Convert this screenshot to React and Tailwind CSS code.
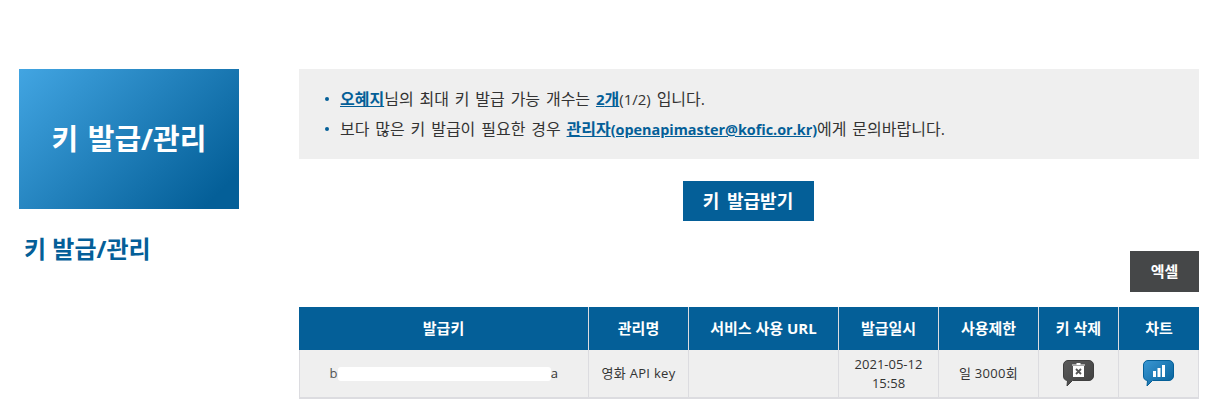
const font = { fontFamily: '"Open Sans","Noto Sans CJK KR","Noto Sans",sans-serif' };

function Bubble({ from, to, id, children }) {
  return (
    <svg width="31" height="27" viewBox="0 0 31 27" className="block">
      <defs>
        <linearGradient id={id} x1="0" y1="0" x2="1" y2="1">
          <stop offset="0" stopColor={from} />
          <stop offset="1" stopColor={to} />
        </linearGradient>
      </defs>
      <path d="M5 .5h21a4.500 4.500 0 0 1 4.500 4.500v11a4.500 4.500 0 0 1-4.500 4.500H9.500L4 26l.5-5.500A4.500 4.500 0 0 1 .5 16V5A4.500 4.500 0 0 1 5 .5z" fill={`url(#${id})`} stroke={to} />
      {children}
    </svg>
  );
}

const cols = [
  ['발급키', 'w-[290px]'],
  ['관리명', 'w-[100px]'],
  ['서비스 사용 URL', 'w-[150px]'],
  ['발급일시', 'w-[100px]'],
  ['사용제한', 'w-[100px]'],
  ['키 삭제', 'w-[80px]'],
  ['차트', 'w-[80px]'],
];

export default function App() {
  return (
    <div style={font} className="w-[1231px] h-[415px] bg-white overflow-hidden flex pt-[69px] pl-[19px]">
      <aside className="w-[220px] shrink-0">
        <div className="h-[140px] flex items-center justify-center bg-[linear-gradient(135deg,#42a5e2,#045f98_90%)] text-white text-[29px] font-bold [word-spacing:2px]">
          키 발급/관리
        </div>
        <h2 className="mt-[24px] ml-[5px] text-[24px] leading-[32px] font-bold text-[#045f98]">키 발급/관리</h2>
      </aside>
      <main className="w-[900px] ml-[60px] shrink-0">
        <ul className="h-[90px] bg-[#efefef] pl-[26px] pt-[15px] text-[16px] leading-[30px] text-[#333] [word-spacing:1.7px]">
          <li className="flex items-center h-[30px]">
            <span className="w-[4px] h-[4px] rounded-full bg-[#045f98] mr-[11px]" />
            <span>
              <a className="font-bold underline text-[#045f98]">오혜지</a>님의 최대 키 발급 가능 개수는{' '}
              <a className="font-bold underline text-[#045f98]"><span className="text-[15px]">2</span>개</a><span className="text-[15px]">(1/2)</span> 입니다.
            </span>
          </li>
          <li className="flex items-center h-[30px]">
            <span className="w-[4px] h-[4px] rounded-full bg-[#045f98] mr-[11px]" />
            <span>
              보다 많은 키 발급이 필요한 경우{' '}
              <a className="font-bold underline text-[#045f98]">관리자<span className="text-[14.4px]">(openapimaster@kofic.or.kr)</span></a>에게 문의바랍니다.
            </span>
          </li>
        </ul>
        <div className="flex justify-center mt-[22px] pr-[2px]">
          <button className="w-[131px] h-[40px] bg-[#045f98] text-white text-[18px] font-bold [word-spacing:3px]">키 발급받기</button>
        </div>
        <div className="flex justify-end mt-[30px]">
          <button className="w-[69px] h-[41px] bg-[#454748] text-white text-[15px] font-bold">엑셀</button>
        </div>
        <div className="mt-[15px] w-[900px]">
          <div className="flex h-[43px] bg-[#045f98] text-white text-[15px] font-bold">
            {cols.map(([label, w], i) => (
              <div key={label} className={`${w} flex items-center justify-center ${i < 6 ? 'border-r border-[#dcdce0]' : ''}`}>
                {label}
              </div>
            ))}
          </div>
          <div className="flex h-[49px] bg-[#efefef] border-b-2 border-x border-[#dcdce0] text-[13px] text-[#333] tracking-[0.3px]">
            <div className="w-[289px] flex items-center justify-center border-r border-[#dcdce0]">
              <span className="text-[#555]">b</span>
              <span className="w-[213px] h-[14px] bg-white rounded-[3px]" />
              <span>a</span>
            </div>
            <div className="w-[100px] flex items-center justify-center border-r border-[#dcdce0]">영화 API key</div>
            <div className="w-[150px] border-r border-[#dcdce0]" />
            <div className="w-[100px] flex items-center justify-center text-center leading-[19px] tracking-normal border-r border-[#dcdce0]">
              2021-05-12<br />15:58
            </div>
            <div className="w-[100px] flex items-center justify-center border-r border-[#dcdce0]">일 3000회</div>
            <div className="w-[80px] flex items-center justify-center border-r border-[#dcdce0]">
              <Bubble id="g1" from="#5c5c5c" to="#3f3f3f">
                <path d="M10 6h11v11H10zM9 4.500h13V5.500H9zM13.500 3h4v1.500h-4z" fill="#fff" />
                <path d="M13 9l5 5M18 9l-5 5" stroke="#555" strokeWidth="1.800" />
              </Bubble>
            </div>
            <div className="flex-1 flex items-center justify-center">
              <Bubble id="g2" from="#3a97d3" to="#045f98">
                <path d="M10 11h3v6h-3zM14.500 8h3v9h-3zM19 5h3v12h-3z" fill="#fff" />
              </Bubble>
            </div>
          </div>
        </div>
      </main>
    </div>
  );
}
